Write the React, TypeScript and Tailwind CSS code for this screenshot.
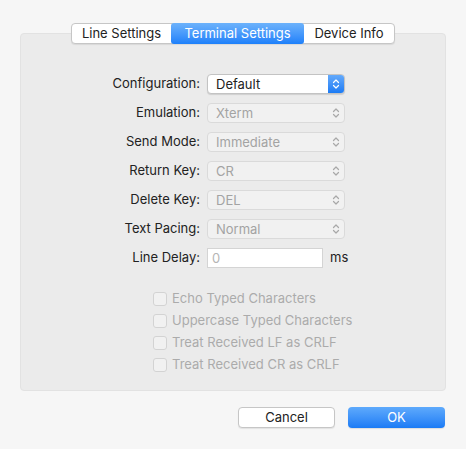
import React from 'react'

const FONT = { fontFamily: 'Inter, "Liberation Sans", Arial, sans-serif' }

const ROWS = [
  { label: 'Configuration:', value: 'Default', enabled: true },
  { label: 'Emulation:', value: 'Xterm', enabled: false },
  { label: 'Send Mode:', value: 'Immediate', enabled: false },
  { label: 'Return Key:', value: 'CR', enabled: false },
  { label: 'Delete Key:', value: 'DEL', enabled: false },
  { label: 'Text Pacing:', value: 'Normal', enabled: false },
]

const CHECKS = [
  'Echo Typed Characters',
  'Uppercase Typed Characters',
  'Treat Received LF as CRLF',
  'Treat Received CR as CRLF',
]

function Chevrons({ color }: { color: string }) {
  return (
    <svg width="8" height="12" viewBox="0 0 8 12" fill="none">
      <path d="M1.5 4.5 L4 2 L6.5 4.5" stroke={color} strokeWidth="1.2" strokeLinecap="round" strokeLinejoin="round" />
      <path d="M1.5 7.5 L4 10 L6.5 7.5" stroke={color} strokeWidth="1.2" strokeLinecap="round" strokeLinejoin="round" />
    </svg>
  )
}

function Popup({ value, enabled }: { value: string; enabled: boolean }) {
  if (enabled) {
    return (
      <div className="flex h-[20px] w-[138px] items-stretch overflow-hidden rounded-[4px] border border-[#c3c3c3] bg-white shadow-[0_1px_1px_rgba(0,0,0,0.12)]">
        <div className="flex-1 pl-[8px] text-[13px] leading-[18px] text-[#222]">{value}</div>
        <div className="flex w-[16px] items-center justify-center bg-gradient-to-b from-[#63a9fb] to-[#1a7bf4]">
          <Chevrons color="#ffffff" />
        </div>
      </div>
    )
  }
  return (
    <div className="flex h-[20px] w-[138px] items-center rounded-[4px] border border-[#dadada] bg-[#f1f1f1]">
      <div className="flex-1 pl-[8px] text-[13px] leading-[18px] text-[#a3a3a3]">{value}</div>
      <div className="flex w-[16px] items-center justify-center">
        <Chevrons color="#a8a8a8" />
      </div>
    </div>
  )
}

export default function App() {
  return (
    <div className="flex h-[449px] w-[466px] flex-col bg-[#f6f6f6] pt-[23px]" style={FONT}>
      <div className="relative z-10 -mb-[11px] flex justify-center">
        <div className="flex h-[21px] rounded-[4px] border border-[#c6c6c6] bg-white text-[13px] text-[#222] shadow-[0_1px_1px_rgba(0,0,0,0.08)]">
          <div className="flex w-[99px] items-center justify-center">Line Settings</div>
          <div className="-my-px flex w-[133px] items-center justify-center rounded-[3px] bg-gradient-to-b from-[#6cb2fb] to-[#1c80fa] text-white">
            Terminal Settings
          </div>
          <div className="flex w-[90px] items-center justify-center">Device Info</div>
        </div>
      </div>

      <div className="mx-[20px] h-[358px] rounded-[4px] border border-[#e2e2e2] bg-[#ebebeb] pt-[40px]">
        <div className="flex flex-col gap-[9px]">
          {ROWS.map((r) => (
            <div key={r.label} className="flex items-center gap-[7px]">
              <div className="w-[179px] text-right text-[13px] text-[#222]">{r.label}</div>
              <Popup value={r.value} enabled={r.enabled} />
            </div>
          ))}
          <div className="flex items-center gap-[7px]">
            <div className="w-[179px] text-right text-[13px] text-[#222]">Line Delay:</div>
            <div className="h-[20px] w-[116px] border border-[#d4d4d4] bg-white pl-[4px] text-[13px] leading-[18px] text-[#b5b5b5]">
              0
            </div>
            <div className="text-[13px] text-[#222]">ms</div>
          </div>
        </div>

        <div className="mt-[24px] flex flex-col gap-[8px] pl-[132px]">
          {CHECKS.map((c) => (
            <div key={c} className="flex h-[14px] items-center gap-[5px]">
              <div className="h-[14px] w-[14px] rounded-[3px] border border-[#d3d3d3] bg-[#f1f1f1]" />
              <span className="text-[13px] text-[#ababab]">{c}</span>
            </div>
          ))}
        </div>
      </div>

      <div className="mt-[16px] flex justify-end gap-[13px] pr-[21px]">
        <div className="flex h-[21px] w-[97px] items-center justify-center rounded-[4px] border border-[#c6c6c6] bg-white text-[13px] text-[#222] shadow-[0_1px_1px_rgba(0,0,0,0.08)]">
          Cancel
        </div>
        <div className="flex h-[21px] w-[97px] items-center justify-center rounded-[4px] bg-gradient-to-b from-[#5eaafc] to-[#1a7bf5] text-[13px] text-white shadow-[0_1px_1px_rgba(0,0,0,0.1)]">
          OK
        </div>
      </div>
    </div>
  )
}
